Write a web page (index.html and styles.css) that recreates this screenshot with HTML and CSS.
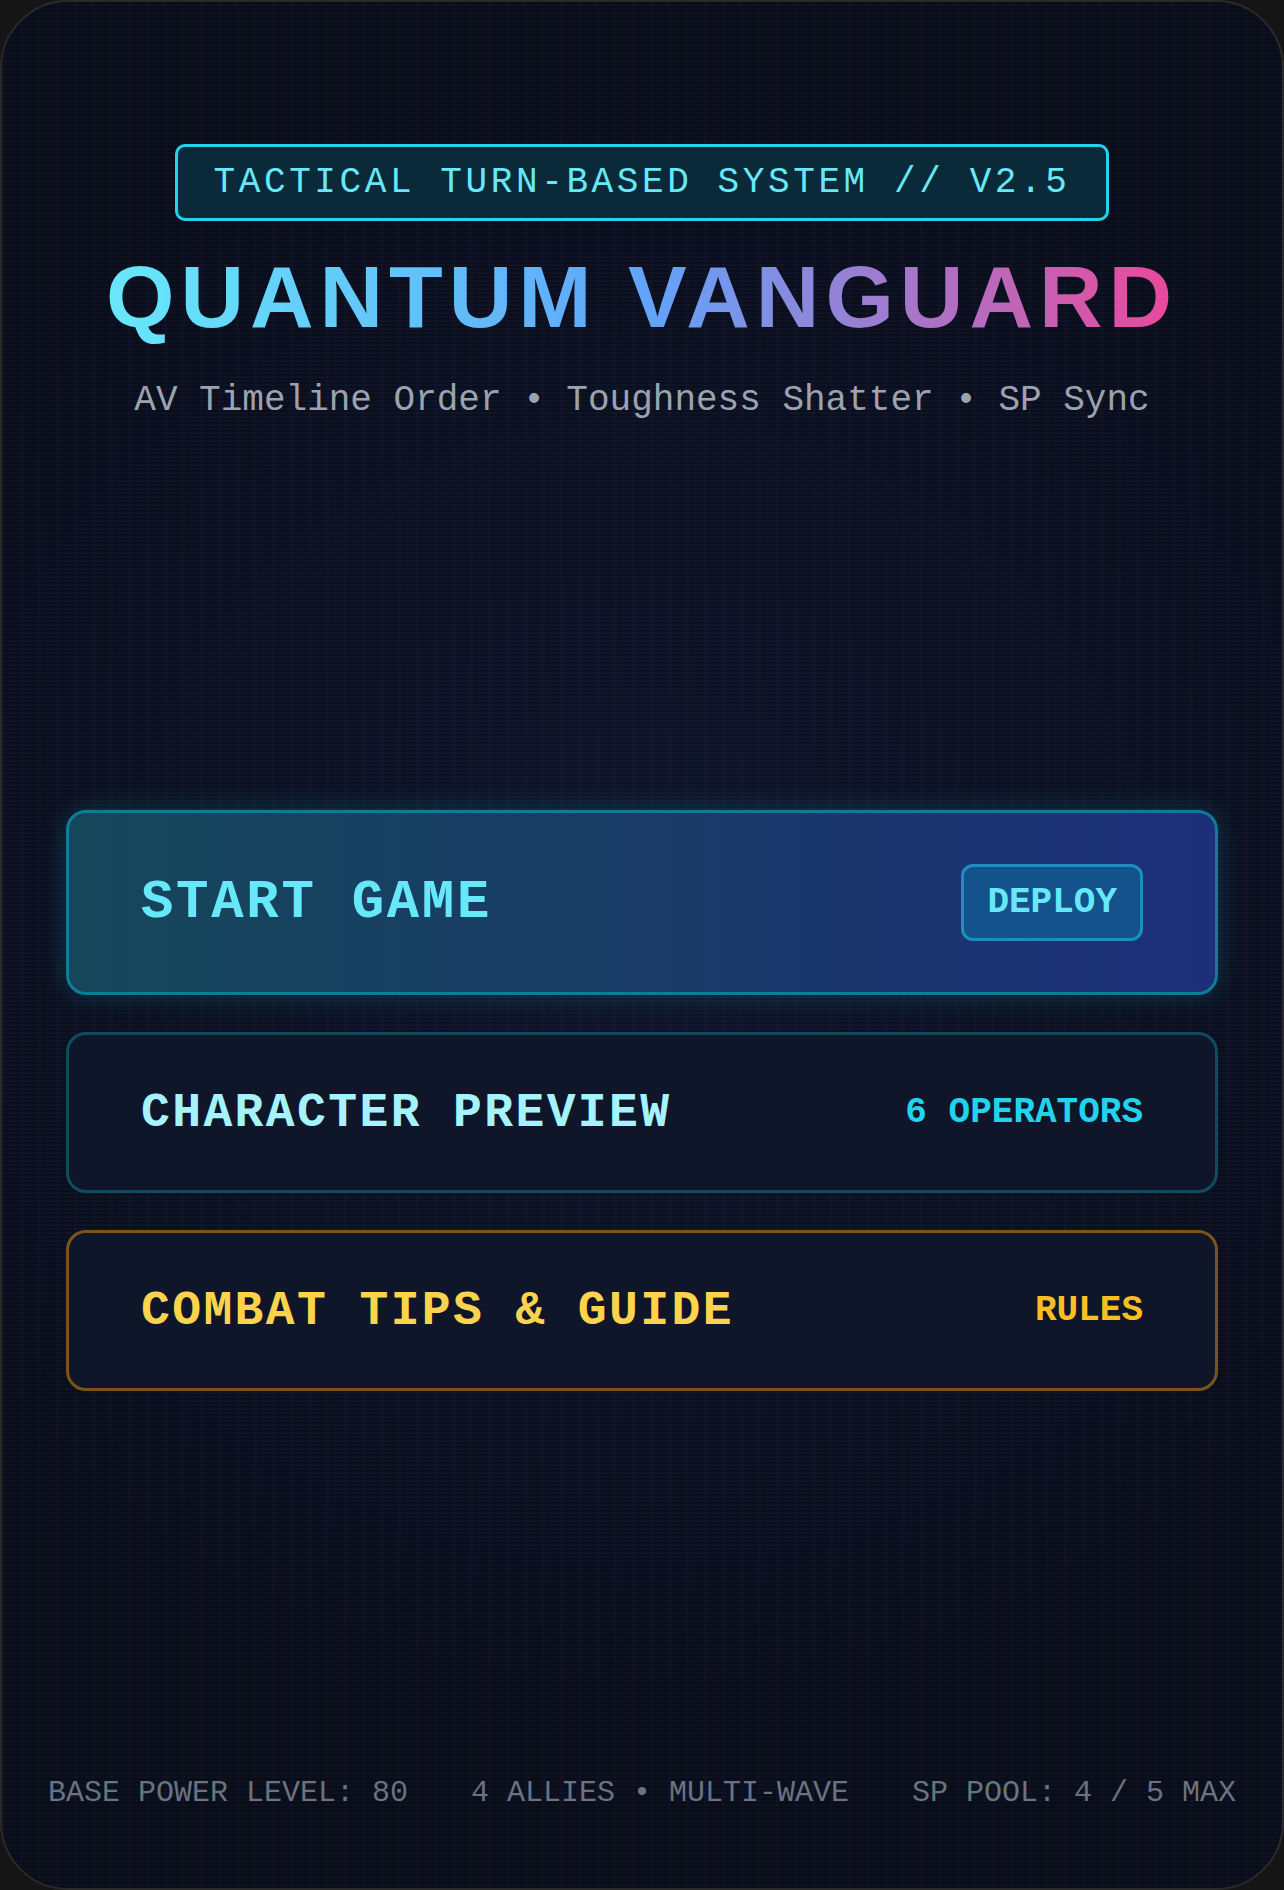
FILE: index.html
```html
<!DOCTYPE html>
<html lang="en">
<head>
<meta charset="utf-8">
<title>Quantum Vanguard</title>
<link rel="stylesheet" href="styles.css">
</head>
<body>
<div class="screen">
  <header class="hero">
    <div class="badge">TACTICAL TURN-BASED SYSTEM // V2.5</div>
    <h1 class="title">QUANTUM VANGUARD</h1>
    <p class="subtitle">AV Timeline Order • Toughness Shatter • SP Sync</p>
  </header>

  <nav class="menu">
    <div class="card card-start">
      <span class="label label-start">START GAME</span>
      <span class="deploy">DEPLOY</span>
    </div>
    <div class="card card-char">
      <span class="label label-char">CHARACTER PREVIEW</span>
      <span class="meta meta-char">6 OPERATORS</span>
    </div>
    <div class="card card-tips">
      <span class="label label-tips">COMBAT TIPS &amp; GUIDE</span>
      <span class="meta meta-tips">RULES</span>
    </div>
  </nav>

  <footer class="stats">
    <span>BASE POWER LEVEL: 80</span>
    <span>4 ALLIES • MULTI-WAVE</span>
    <span>SP POOL: 4 / 5 MAX</span>
  </footer>
</div>
</body>
</html>
```

FILE: styles.css
```css
* {
  box-sizing: border-box;
  margin: 0;
  padding: 0;
}

html,
body {
  width: 1284px;
  height: 1890px;
  background: #151515;
  overflow: hidden;
}

.screen {
  width: 1284px;
  height: 1890px;
  border: 2px solid #2a2a2a;
  border-radius: 68px;
  overflow: hidden;
  display: flex;
  flex-direction: column;
  align-items: center;
  padding: 142px 0 77px;
  font-family: "Liberation Mono", "DejaVu Sans Mono", monospace;
  background-color: #0c1120;
  background-image:
    repeating-linear-gradient(180deg, rgba(0, 0, 0, 0.26) 0 2px, rgba(0, 0, 0, 0) 2px 4px),
    repeating-linear-gradient(90deg, rgba(140, 60, 190, 0.04) 0 3px, rgba(0, 0, 0, 0) 3px 18px),
    radial-gradient(ellipse 70% 45% at 50% 48%, rgba(28, 44, 88, 0.32), rgba(0, 0, 0, 0) 100%);
}

/* ---------- hero ---------- */
.hero {
  display: flex;
  flex-direction: column;
  align-items: center;
  text-align: center;
}

.badge {
  border: 3px solid #22d3ee;
  border-radius: 10px;
  background: #0a2a3a;
  color: #67e8f9;
  font-size: 36px;
  line-height: 43px;
  letter-spacing: 3.6px;
  padding: 14px 36px;
  white-space: nowrap;
}

.title {
  margin-top: 28px;
  font-family: "Liberation Sans", Arial, sans-serif;
  font-weight: bold;
  font-size: 88px;
  line-height: 96px;
  letter-spacing: 6px;
  white-space: nowrap;
  background: linear-gradient(90deg, #67e8f9 0%, #60a5fa 50%, #ec4899 100%);
  -webkit-background-clip: text;
  background-clip: text;
  color: transparent;
}

.subtitle {
  margin-top: 34px;
  font-size: 36px;
  line-height: 43px;
  color: #9ca3af;
  white-space: nowrap;
}

/* ---------- menu ---------- */
.menu {
  margin-top: 388px;
  width: 100%;
  padding: 0 64px;
  display: flex;
  flex-direction: column;
  gap: 37px;
}

.card {
  display: flex;
  justify-content: space-between;
  align-items: center;
  border: 3px solid #114d61;
  border-radius: 20px;
  background: #10162a;
  padding: 0 72px;
  font-weight: bold;
  white-space: nowrap;
}

.card-start {
  height: 185px;
  border-color: #0f7c99;
  background: linear-gradient(90deg, #15465a 0%, #193b66 50%, #1d2f7a 100%);
  box-shadow: 0 0 26px rgba(34, 211, 238, 0.2);
}

.card-char,
.card-tips {
  height: 161px;
}

.card-char {
  border-color: #114b5f;
}

.card-tips {
  border-color: #7a5419;
}

.label-start {
  font-size: 54px;
  line-height: 64px;
  letter-spacing: 2.7px;
  color: #67e8f9;
}

.label-char,
.label-tips {
  font-size: 48px;
  line-height: 58px;
  letter-spacing: 2.4px;
}

.label-char {
  color: #a5f3fc;
}

.label-tips {
  color: #fcd34d;
}

.deploy {
  border: 3px solid #1b8fbd;
  border-radius: 12px;
  background: #13528a;
  color: #67e8f9;
  font-size: 36px;
  line-height: 43px;
  padding: 14px 23px;
}

.meta {
  font-size: 36px;
  line-height: 43px;
}

.meta-char {
  color: #22d3ee;
}

.meta-tips {
  color: #fbbf24;
}

/* ---------- footer ---------- */
.stats {
  margin-top: auto;
  width: 100%;
  padding: 0 46px;
  display: flex;
  justify-content: space-between;
  font-size: 30px;
  line-height: 36px;
  color: #6b7280;
  white-space: nowrap;
}
```
